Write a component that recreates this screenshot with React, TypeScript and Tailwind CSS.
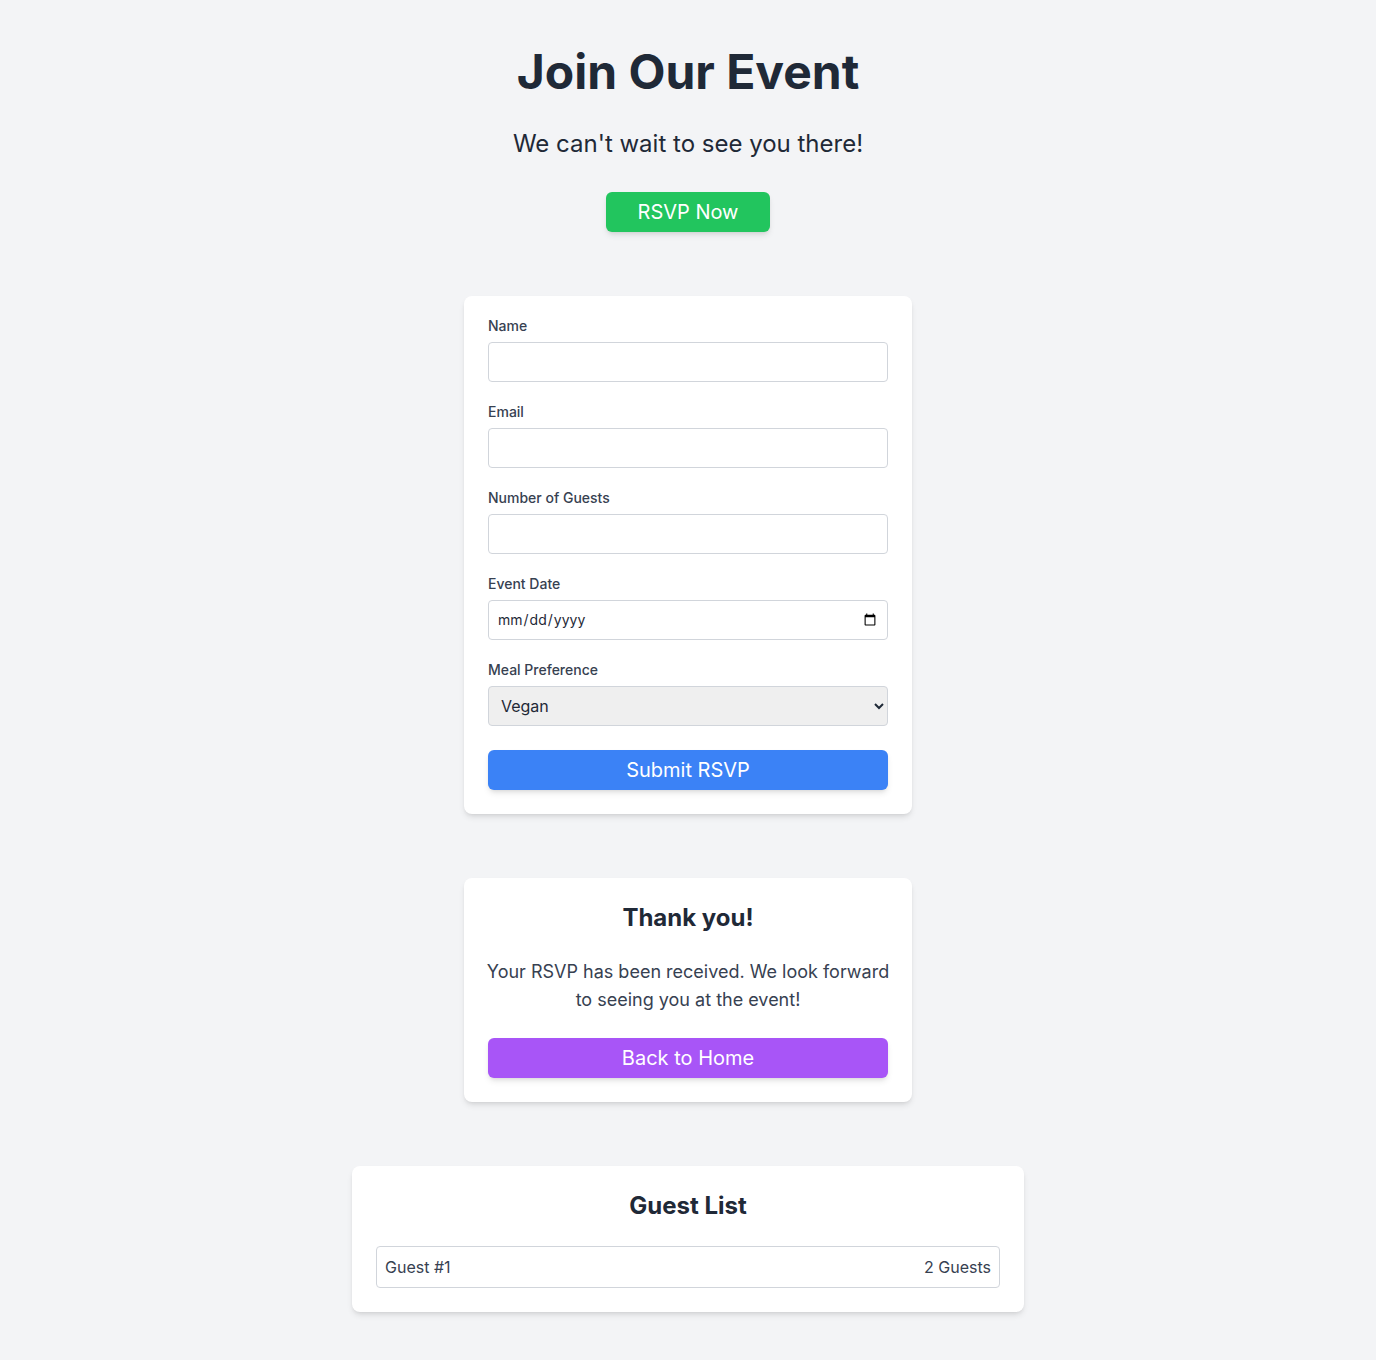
import { useState } from 'react';

type Guest = { id: number; count: number };

export default function App() {
  const [meal, setMeal] = useState('Vegan');
  const guests: Guest[] = [{ id: 1, count: 2 }];

  return (
    <div className="min-h-screen bg-[#f3f4f6] py-12 flex flex-col items-center font-['Inter','Liberation_Sans',sans-serif] text-[#1f2937]">
      <section className="flex flex-col items-center">
        <h1 className="text-5xl leading-[48px] font-bold text-[#1f2937] mb-8">Join Our Event</h1>
        <p className="text-2xl leading-8 text-[#1f2937] mb-8">We can't wait to see you there!</p>
        <button className="bg-[#22c55e] text-white text-xl leading-7 px-8 py-1.5 rounded-md shadow-md">
          RSVP Now
        </button>
      </section>

      <form
        className="mt-16 w-full max-w-md bg-white rounded-lg shadow-md px-6 pt-5 pb-6"
        onSubmit={(e) => e.preventDefault()}
      >
        <div className="mb-5">
          <label className="block text-sm font-medium text-[#374151] mb-1.5">Name</label>
          <input type="text" className="w-full h-10 border border-[#d1d5db] rounded px-3" />
        </div>
        <div className="mb-5">
          <label className="block text-sm font-medium text-[#374151] mb-1.5">Email</label>
          <input type="email" className="w-full h-10 border border-[#d1d5db] rounded px-3" />
        </div>
        <div className="mb-5">
          <label className="block text-sm font-medium text-[#374151] mb-1.5">Number of Guests</label>
          <input type="number" className="w-full h-10 border border-[#d1d5db] rounded px-3" />
        </div>
        <div className="mb-5">
          <label className="block text-sm font-medium text-[#374151] mb-1.5">Event Date</label>
          <input type="date" className="w-full h-10 border border-[#d1d5db] rounded px-2 text-sm" />
        </div>
        <div className="mb-6">
          <label className="block text-sm font-medium text-[#374151] mb-1.5">Meal Preference</label>
          <select
            value={meal}
            onChange={(e) => setMeal(e.target.value)}
            className="w-full h-10 border border-[#d1d5db] rounded px-2 bg-[#efefef] text-base"
          >
            <option>Vegan</option>
            <option>Vegetarian</option>
            <option>Chicken</option>
            <option>Fish</option>
          </select>
        </div>
        <button type="submit" className="w-full h-10 bg-[#3b82f6] text-white text-xl rounded-md shadow-md">
          Submit RSVP
        </button>
      </form>

      <div className="mt-16 w-full max-w-md bg-white rounded-lg shadow-md p-6 text-center">
        <h2 className="text-2xl leading-8 font-bold text-[#1f2937] mb-6">Thank you!</h2>
        <p className="-mx-1 text-lg leading-7 text-[#374151] mb-6">
          Your RSVP has been received. We look forward to seeing you at the event!
        </p>
        <button className="w-full h-10 bg-[#a855f7] text-white text-xl rounded-md shadow-md">
          Back to Home
        </button>
      </div>

      <div className="mt-16 w-full max-w-2xl bg-white rounded-lg shadow-md p-6">
        <h2 className="text-2xl leading-8 font-bold text-[#1f2937] text-center mb-6">Guest List</h2>
        <ul>
          {guests.map((g) => (
            <li
              key={g.id}
              className="flex justify-between border border-[#d1d5db] rounded p-2 text-base text-[#374151]"
            >
              <span>Guest #{g.id}</span>
              <span>{g.count} Guests</span>
            </li>
          ))}
        </ul>
      </div>
    </div>
  );
}
